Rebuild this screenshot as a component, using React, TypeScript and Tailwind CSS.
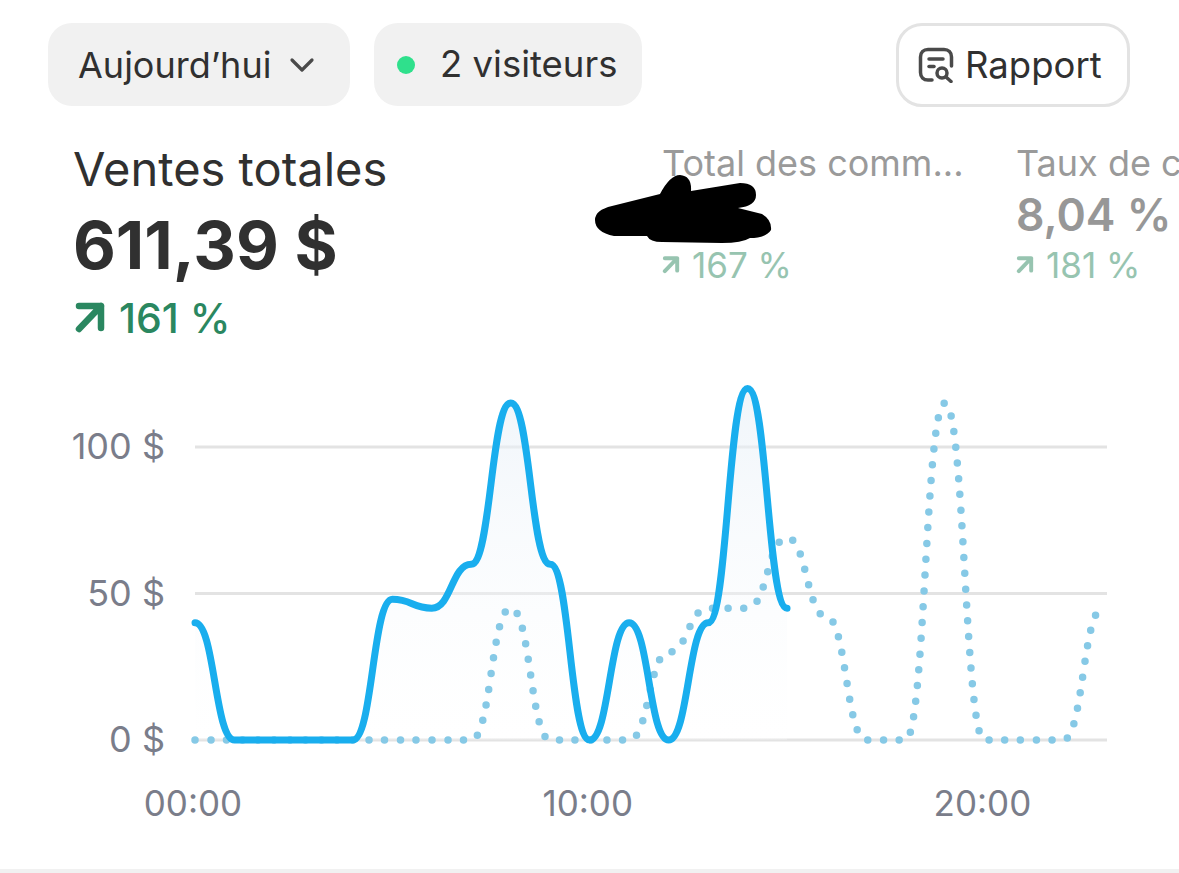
import React from "react";

const FONT = "font-['Inter','Liberation_Sans',sans-serif]";

const CURRENT = [40, 0, 0, 0, 0, 48, 45, 60, 115, 60, 0, 40, 0, 40, 120, 45];
const PREVIOUS = [0, 0, 0, 0, 0, 0, 0, 0, 45, 0, 0, 0, 30, 45, 45, 69, 42, 0, 0, 115, 0, 0, 0, 45];

const X0 = 195;
const X_STEP = 39.47;
const Y0 = 370; // zero line inside the svg
const Y_SCALE = 2.93;

const px = (h: number) => X0 + h * X_STEP;
const py = (v: number) => Y0 - v * Y_SCALE;

// each segment leaves and enters flat, which gives the shoulders of the line
const bumpPath = (values: number[]) =>
  values
    .map((v, i) => {
      if (i === 0) return `M${px(0)} ${py(v)}`;
      const mid = (px(i - 1) + px(i)) / 2;
      return `C${mid} ${py(values[i - 1])} ${mid} ${py(v)} ${px(i)} ${py(v)}`;
    })
    .join(" ");

const ArrowUp = ({ size, stroke }: { size: number; stroke: number }) => (
  <svg width={size} height={size} viewBox="0 0 32 32" fill="none">
    <path
      d="M5 4H27V26M27 4L5 27"
      stroke="currentColor"
      strokeWidth={stroke}
      strokeLinecap="round"
      strokeLinejoin="round"
    />
  </svg>
);

const ReportIcon = () => (
  <svg width="36" height="36" viewBox="0 0 36 36" fill="none" stroke="#4a4a4a" strokeWidth="3.5" strokeLinecap="round">
    <path d="M14 33H10C5.5 33 2.5 30 2.5 25.5V10C2.5 5.5 5.5 2.5 10 2.5H26C30.5 2.5 33.5 5.5 33.5 10V19" />
    <path d="M11 12H25" />
    <path d="M11 19.5H16" />
    <circle cx="24" cy="26" r="5" />
    <path d="M28 30L33 34.5" />
  </svg>
);

const Redaction = () => (
  <svg className="absolute left-[-70px] top-[27px]" width="190" height="80" viewBox="0 0 190 80" fill="none">
    <path
      d="M3 50Q3 40 20 36L68 24Q78 5 88 5Q100 6 99 21L148 13Q164 13 164 25Q164 36 146 38L170 44Q180 50 179 60Q174 68 158 68Q150 73 130 73L70 72Q58 72 55 66L22 66Q3 62 3 50Z"
      fill="#000"
    />
  </svg>
);

const Metric = ({
  label,
  value,
  change,
  redacted,
}: {
  label: string;
  value: string;
  change: string;
  redacted?: boolean;
}) => (
  <div className="relative shrink-0 whitespace-nowrap">
    <div className="text-[36px] leading-[40px] text-[#9a9a9a]">{label}</div>
    <div className="mt-[2px] h-[60px] text-[44.5px] leading-[60px] font-semibold text-[#979797]">{value}</div>
    <div className="mt-[-1px] flex items-center gap-[12px] text-[35px] leading-[42px] text-[#97c4b0]">
      <ArrowUp size={18} stroke={7} />
      {change}
    </div>
    {redacted && <Redaction />}
  </div>
);

const App: React.FC = () => {
  const current = bumpPath(CURRENT);
  const area = `${current} L${px(15)} ${Y0} L${px(0)} ${Y0} Z`;

  return (
    <div className={`${FONT} flex h-[873px] w-[1179px] flex-col overflow-hidden bg-white text-[#303030]`}>
      <div className="flex items-start justify-between pt-[23px] pr-[49px] pl-[48px]">
        <div className="flex gap-[24px]">
          <div className="flex h-[83px] w-[302px] items-center gap-[18px] rounded-[24px] bg-[#f1f1f1] pl-[30px] text-[36px]">
            Aujourd’hui
            <svg width="26" height="16" viewBox="0 0 26 16" fill="none">
              <path d="M3 3L13 13L23 3" stroke="#4a4a4a" strokeWidth="3.2" strokeLinecap="round" strokeLinejoin="round" />
            </svg>
          </div>
          <div className="flex h-[83px] w-[268px] items-center gap-[25px] rounded-[24px] bg-[#f1f1f1] pl-[23px] text-[36.5px]">
            <span className="h-[18px] w-[18px] rounded-full bg-[#2fe08c]" />2 visiteurs
          </div>
        </div>
        <div className="flex h-[84px] w-[234px] items-center gap-[11px] rounded-[26px] border-[3px] border-[#e3e3e3] pl-[19px] text-[36.5px]">
          <ReportIcon />
          Rapport
        </div>
      </div>

      <div className="flex overflow-hidden pt-[35px] pl-[73px]">
        <div className="w-[589px] shrink-0 pt-[1px]">
          <div className="text-[47px] leading-[52px]">Ventes totales</div>
          <div className="mt-[12px] text-[66px] leading-[76px] font-bold">611,39 $</div>
          <div className="mt-[12px] flex items-center gap-[13px] text-[41px] leading-[46px] font-medium text-[#2a8760]">
            <span className="pl-[1px]">
              <ArrowUp size={32} stroke={6.5} />
            </span>
            161 %
          </div>
        </div>
        <div className="w-[354px] shrink-0 pt-[1px]">
          <Metric label="Total des comm..." value="" change="167 %" redacted />
        </div>
        <div className="shrink-0 pt-[1px]">
          <Metric label="Taux de c" value="8,04 %" change="181 %" />
        </div>
      </div>

      <svg className="mt-[29px] block shrink-0" width="1179" height="460" viewBox="0 0 1179 460" fill="none">
        <defs>
          <linearGradient id="areaFill" x1="0" y1="0" x2="0" y2="1">
            <stop offset="0" stopColor="#e6eff7" stopOpacity="0.6" />
            <stop offset="1" stopColor="#ffffff" stopOpacity="0.2" />
          </linearGradient>
        </defs>
        {[0, 50, 100].map((v) => (
          <g key={v}>
            <line x1={X0} x2="1107" y1={py(v)} y2={py(v)} stroke="#e3e3e3" strokeWidth="3" />
            <text x="165" y={py(v) + 12} textAnchor="end" fontSize="36" fill="#7a7d8a">
              {v} $
            </text>
          </g>
        ))}
        {[0, 10, 20].map((h) => (
          <text key={h} x={px(h) - 2} y={Y0 + 76} textAnchor="middle" fontSize="35" fill="#7a7d8a">
            {String(h).padStart(2, "0")}:00
          </text>
        ))}
        <path d={area} fill="url(#areaFill)" />
        <path
          d={bumpPath(PREVIOUS)}
          stroke="#86c9e6"
          strokeWidth="7.5"
          strokeLinecap="round"
          strokeDasharray="0 15.8"
        />
        <path d={current} stroke="#19aeee" strokeWidth="7" strokeLinecap="round" strokeLinejoin="round" />
      </svg>

      <div className="mt-auto h-[4px] bg-[#f1f1f1]" />
    </div>
  );
};

export default App;
